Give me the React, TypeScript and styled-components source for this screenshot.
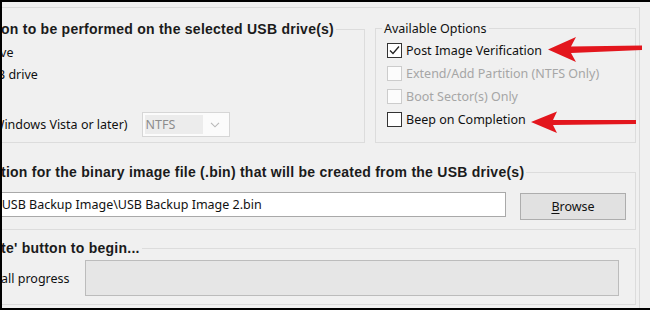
import React from 'react';
import styled, { createGlobalStyle } from 'styled-components';

const Global = createGlobalStyle`
  html, body { margin: 0; padding: 0; background: #f0f0f0; }
  body { font-family: "Noto Sans", "Liberation Sans", sans-serif; }
`;

const Window = styled.div`
  position: relative;
  width: 650px;
  height: 310px;
  box-sizing: border-box;
  border-top: 2px solid #000;
  border-left: 2px solid #000;
  border-bottom: 2px solid #000;
  background: #f0f0f0;
  overflow: hidden;
  padding-top: 5px;
`;

const Frame = styled.div`
  width: 638px;
  height: 301px;
  box-sizing: border-box;
  border-top: 1px solid #dadada;
  border-right: 1px solid #dadada;
  display: flex;
  flex-direction: column;
`;

const TopRow = styled.div`
  display: flex;
  align-items: stretch;
  gap: 10px;
  height: 121px;
  margin: 14px 0 0 -22px;
`;

const Group = styled.fieldset<{ $w?: number; $pl?: number; $pr?: number; $pt?: number; $pb?: number; $mt?: number }>`
  margin: ${(p) => p.$mt ?? 0}px 0 0 0;
  padding: ${(p) => p.$pt ?? 0}px ${(p) => p.$pr ?? 0}px ${(p) => p.$pb ?? 0}px ${(p) => p.$pl ?? 0}px;
  border: 1px solid #dcdcdc;
  min-width: 0;
  box-sizing: border-box;
  ${(p) => (p.$w ? `width: ${p.$w}px; flex: none;` : '')}
`;

const WideGroup = styled(Group)`
  margin: ${(p) => p.$mt ?? 0}px 3px 0 -22px;
`;

const TitleLegend = styled.legend<{ $ml: number }>`
  margin-left: ${(p) => p.$ml}px;
  padding: 0 2px;
  font: bold 14px "Liberation Sans", Arial, sans-serif;
  letter-spacing: 0.25px;
  line-height: 15px;
  color: #1b1b1b;
  white-space: nowrap;
`;

const PlainLegend = styled.legend<{ $ml: number }>`
  margin-left: ${(p) => p.$ml}px;
  padding: 0 2px;
  font-size: 12.5px;
  line-height: 15px;
  color: #111;
  white-space: nowrap;
`;

const TextRow = styled.div<{ $h: number; $x?: number; $mt?: number }>`
  display: flex;
  align-items: center;
  height: ${(p) => p.$h}px;
  margin-top: ${(p) => p.$mt ?? 0}px;
  padding-left: ${(p) => p.$x ?? 0}px;
  font-size: 12.5px;
  color: #111;
  white-space: nowrap;
`;

const Combo = styled.div`
  display: flex;
  align-items: center;
  margin-left: 14px;
  width: 88px;
  height: 25px;
  box-sizing: border-box;
  border: 1px solid #d6d6d6;
  background: #fbfbfb;
  padding: 2px;
`;

const ComboValue = styled.div`
  width: 58px;
  height: 100%;
  box-sizing: border-box;
  background: #ececec;
  padding-left: 1px;
  display: flex;
  align-items: center;
  color: #8c8c8c;
  font-size: 12.5px;
`;

const ComboArrow = styled.div`
  flex: 1;
  display: flex;
  align-items: center;
  justify-content: center;
`;

const CheckRow = styled.div<{ $disabled?: boolean }>`
  display: flex;
  align-items: center;
  gap: 4px;
  height: 23px;
  font-size: 12.5px;
  color: ${(p) => (p.$disabled ? '#a6a6a6' : '#111')};
  white-space: nowrap;
`;

const Box = styled.span<{ $disabled?: boolean }>`
  width: 15px;
  height: 15px;
  box-sizing: border-box;
  border: 1px solid ${(p) => (p.$disabled ? '#cccccc' : '#333333')};
  background: ${(p) => (p.$disabled ? '#fcfcfc' : '#ffffff')};
  display: flex;
  align-items: center;
  justify-content: center;
  flex: none;
`;

const FileRow = styled.div`
  display: flex;
  align-items: flex-start;
`;

const TextBox = styled.div`
  width: 525px;
  height: 25px;
  box-sizing: border-box;
  border: 1px solid #a9a9a9;
  background: #fff;
  display: flex;
  align-items: center;
  padding-left: 15px;
  font-size: 12.5px;
  color: #111;
  white-space: nowrap;
  overflow: hidden;
`;

const Button = styled.div`
  margin: 1px 0 0 14px;
  width: 106px;
  height: 27px;
  box-sizing: border-box;
  border: 1px solid #adadad;
  background: #e1e1e1;
  display: flex;
  align-items: center;
  justify-content: center;
  font-size: 12.5px;
  color: #111;
  u { text-decoration: underline; text-underline-offset: 2px; }
`;

const ProgressRow = styled.div`
  display: flex;
  align-items: center;
`;

const ProgressLabel = styled.div`
  flex: 1;
  padding-left: 20px;
  font-size: 12.5px;
  color: #111;
  white-space: nowrap;
`;

const ProgressBar = styled.div`
  width: 534px;
  height: 36px;
  box-sizing: border-box;
  border: 1px solid #bcbcbc;
  background: #e6e6e6;
`;

const Overlay = styled.svg`
  position: absolute;
  left: -2px;
  top: -2px;
  pointer-events: none;
`;

const Check = () => (
  <svg width="13" height="13" viewBox="0 0 13 13">
    <polyline points="2,6.5 5,9.5 11,2.5" fill="none" stroke="#222" strokeWidth="1.3" />
  </svg>
);

const Chevron = () => (
  <svg width="10" height="6" viewBox="0 0 10 6">
    <polyline points="1,0.8 5,4.8 9,0.8" fill="none" stroke="#b8b8b8" strokeWidth="1.1" />
  </svg>
);

const options = [
  { label: 'Post Image Verification', checked: true, disabled: false },
  { label: 'Extend/Add Partition (NTFS Only)', checked: false, disabled: true },
  { label: 'Boot Sector(s) Only', checked: false, disabled: true },
  { label: 'Beep on Completion', checked: false, disabled: false },
];

export default function App() {
  return (
    <>
      <Global />
      <Window>
        <Frame>
          <TopRow>
            <Group $w={385} $pt={4}>
              <TitleLegend $ml={18}>on to be performed on the selected USB drive(s)</TitleLegend>
              <TextRow $h={22} $x={3}>drive</TextRow>
              <TextRow $h={22} $x={-2}>USB drive</TextRow>
              <TextRow $h={22} />
              <TextRow $h={25} $x={8} $mt={5}>
                (Windows Vista or later)
                <Combo>
                  <ComboValue>NTFS</ComboValue>
                  <ComboArrow>
                    <Chevron />
                  </ComboArrow>
                </Combo>
              </TextRow>
            </Group>
            <Group $w={261} $mt={-1} $pl={11} $pt={3}>
              <PlainLegend $ml={-5}>Available Options</PlainLegend>
              {options.map((o) => (
                <CheckRow key={o.label} $disabled={o.disabled}>
                  <Box $disabled={o.disabled}>{o.checked && <Check />}</Box>
                  {o.label}
                </CheckRow>
              ))}
            </Group>
          </TopRow>
          <WideGroup $mt={22} $pt={12} $pb={9} $pr={9}>
            <TitleLegend $ml={18}>
              tion for the binary image file (.bin) that will be created from the USB drive(s)
            </TitleLegend>
            <FileRow>
              <TextBox>\USB Backup Image\USB Backup Image 2.bin</TextBox>
              <Button>
                <span>
                  <u>B</u>rowse
                </span>
              </Button>
            </FileRow>
          </WideGroup>
          <WideGroup $mt={11} $pt={4} $pb={8} $pr={16}>
            <TitleLegend $ml={18}>te' button to begin...</TitleLegend>
            <ProgressRow>
              <ProgressLabel>all progress</ProgressLabel>
              <ProgressBar />
            </ProgressRow>
          </WideGroup>
        </Frame>
        <Overlay width="650" height="310" viewBox="0 0 650 310">
          <polygon
            points="548,49.5 576,37 571,46.5 642,45.5 642,50 571,53 576,62"
            fill="#e3161d"
          />
          <polygon
            points="531,122 557,111.5 553,120 636,120 636,124 553,125 557,133"
            fill="#e3161d"
          />
        </Overlay>
      </Window>
    </>
  );
}
